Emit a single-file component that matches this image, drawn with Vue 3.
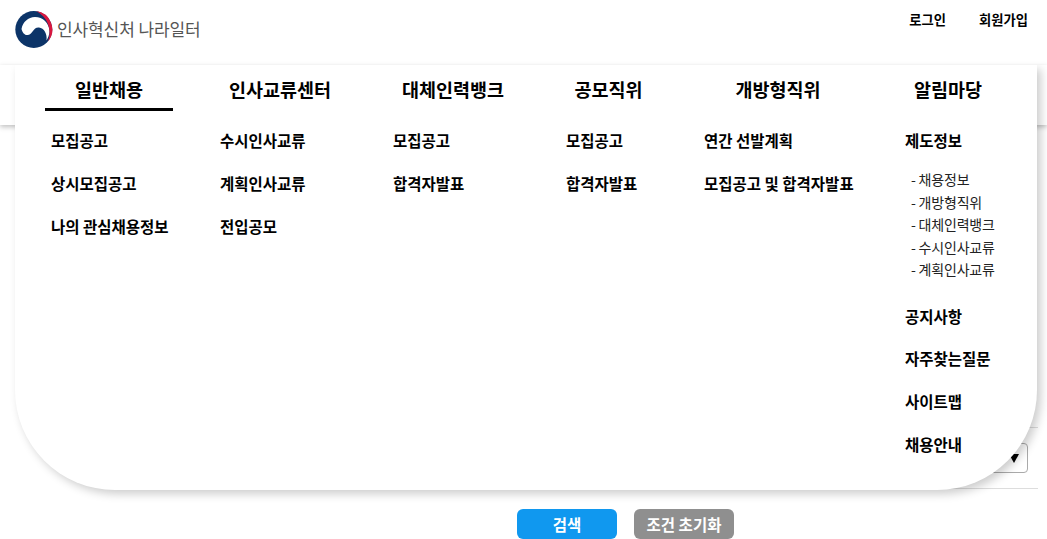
<script setup>
const columns = [
  { title: '일반채용', width: 128, active: true, items: ['모집공고', '상시모집공고', '나의 관심채용정보'] },
  { title: '인사교류센터', width: 132, items: ['수시인사교류', '계획인사교류', '전입공모'] },
  { title: '대체인력뱅크', width: 132, items: ['모집공고', '합격자발표'] },
  { title: '공모직위', width: 97, items: ['모집공고', '합격자발표'] },
  { title: '개방형직위', width: 160, items: ['연간 선발계획', '모집공고 및 합격자발표'] },
]
const infoLinks = ['채용정보', '개방형직위', '대체인력뱅크', '수시인사교류', '계획인사교류']
const moreLinks = ['공지사항', '자주찾는질문', '사이트맵', '채용안내']
</script>

<template>
  <div class="page">
    <header class="top">
      <a class="logo">
        <svg class="emblem" viewBox="0 0 38 38" width="38" height="38">
          <circle cx="18.8" cy="18.5" r="18.5" fill="#0c3468" />
          <path d="M6.500 18C8 10.500 13 6.500 20 6C28 6 34 12 34.500 20C34.500 24 33 27 31.500 29.500C32.500 23 29 17 24 16.500C18 16 18 23 13 24C10 24.500 7.500 22 6.500 18Z" fill="#fff" />
          <path d="M21 0.100A18.500 18.500 0 0 1 33 30.300A24 24 0 0 0 21 0.100Z" fill="#d9173f" />
        </svg>
        <span class="logo-text">인사혁신처 나라일터</span>
      </a>
      <nav class="user-links">
        <a>로그인</a>
        <a>회원가입</a>
      </nav>
    </header>

    <div class="nav-band"></div>

    <main class="content">
      <div class="filter-row">
        <div class="fake-select"><span class="arrow"></span></div>
      </div>
      <div class="actions">
        <button class="btn btn-search">검색</button>
        <button class="btn btn-reset">조건 초기화</button>
      </div>
    </main>

    <div class="mega-menu">
      <div class="menu-columns">
        <section v-for="col in columns" :key="col.title" class="menu-col" :style="{ width: col.width + 'px' }">
          <h2 class="col-title" :class="{ active: col.active }">{{ col.title }}</h2>
          <ul class="col-items">
            <li v-for="item in col.items" :key="item">{{ item }}</li>
          </ul>
        </section>
        <section class="menu-col last-col">
          <h2 class="col-title">알림마당</h2>
          <ul class="col-items">
            <li>제도정보</li>
          </ul>
          <ul class="sub-items">
            <li v-for="link in infoLinks" :key="link">- {{ link }}</li>
          </ul>
          <ul class="col-items more">
            <li v-for="link in moreLinks" :key="link">{{ link }}</li>
          </ul>
        </section>
      </div>
    </div>
  </div>
</template>

<style scoped>
.page {
  position: relative;
  width: 1047px;
  height: 539px;
  overflow: hidden;
  background: #fff;
  font-family: "Noto Sans CJK KR", "Noto Sans", sans-serif;
  color: #000;
}

.top {
  height: 65px;
  display: flex;
  justify-content: space-between;
  padding: 11px 19px 0 15px;
  box-sizing: border-box;
}

.logo {
  display: flex;
  align-items: flex-start;
  gap: 4px;
}

.emblem {
  flex: none;
}

.logo-text {
  font-size: 17px;
  line-height: 36px;
  color: #555;
  letter-spacing: -0.1px;
}

.user-links {
  display: flex;
  gap: 33px;
  margin-top: -1px;
  font-size: 13.3px;
  font-weight: 700;
  line-height: 20px;
}

.nav-band {
  height: 60px;
  box-shadow: 0 2px 5px rgba(0, 0, 0, 0.25);
  background: #fff;
}

.content {
  position: relative;
}

.filter-row {
  position: absolute;
  top: 302px;
  left: 120px;
  right: 9px;
  height: 62px;
  border-top: 1px solid #ddd;
  border-bottom: 1px solid #ddd;
  box-sizing: border-box;
  display: flex;
  justify-content: flex-end;
  align-items: center;
}

.fake-select {
  width: 100px;
  height: 30px;
  margin-right: 10px;
  border: 1px solid #aaa;
  border-radius: 4px;
  box-sizing: border-box;
  display: flex;
  justify-content: flex-end;
  align-items: center;
  padding-right: 8px;
}

.arrow {
  width: 0;
  height: 0;
  border-left: 5px solid transparent;
  border-right: 5px solid transparent;
  border-top: 9px solid #000;
}

.actions {
  position: absolute;
  top: 384px;
  left: 517px;
  display: flex;
  gap: 17px;
}

.btn {
  height: 30px;
  border: 0;
  border-radius: 6px;
  color: #fff;
  font-family: inherit;
  font-size: 15.5px;
  font-weight: 700;
  padding: 0;
}

.btn-search {
  width: 100px;
  background: #1098ef;
}

.btn-reset {
  width: 100px;
  background: #8f8f8f;
}

.mega-menu {
  position: absolute;
  top: 65px;
  left: 15px;
  width: 1022px;
  height: 425px;
  box-sizing: border-box;
  padding-left: 30px;
  background: #fff;
  border-radius: 0 0 100px 100px;
  box-shadow: 4px 4px 10px rgba(0, 0, 0, 0.2);
  clip-path: inset(0 -20px -20px -20px);
}

.menu-columns {
  display: flex;
  gap: 41px;
}

.last-col {
  width: 98px;
}

.col-title {
  margin: 0;
  height: 43px;
  line-height: 48px;
  font-size: 18.5px;
  font-weight: 700;
  text-align: center;
  white-space: nowrap;
}

.col-title.active {
  border-bottom: 3px solid #000;
}

.col-items,
.sub-items {
  list-style: none;
  margin: 0;
  padding: 0;
}

.col-items {
  padding: 8px 0 0 6px;
}

.col-title:not(.active) + .col-items {
  padding-top: 11px;
}

.col-items li {
  height: 43px;
  line-height: 42px;
  font-size: 15.5px;
  font-weight: 700;
  white-space: nowrap;
}

.sub-items {
  padding: 6px 0 0 12px;
}

.sub-items li {
  height: 22.500px;
  line-height: 22px;
  font-size: 14px;
  letter-spacing: -0.2px;
  white-space: nowrap;
  color: #222;
}

.col-items.more {
  padding-top: 14px;
}

.col-items.more li {
  height: 42.800px;
}
</style>
